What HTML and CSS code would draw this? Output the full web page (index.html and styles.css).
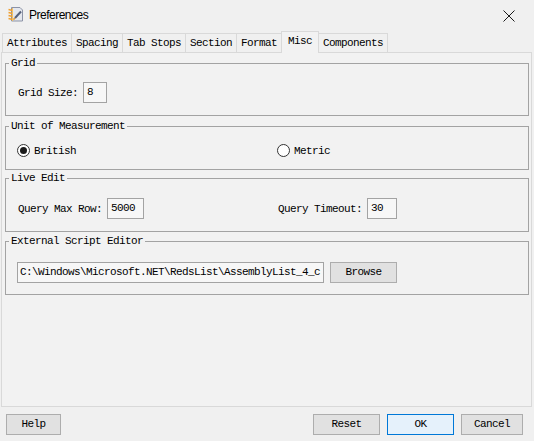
FILE: index.html
```html
<!DOCTYPE html>
<html>
<head>
<meta charset="utf-8">
<title>Preferences</title>
<link rel="stylesheet" href="styles.css">
</head>
<body>
<div class="window">
  <div class="titlebar">
    <svg class="app-icon" width="16" height="16" viewBox="0 0 16 16">
      <path d="M3.5 1.5h8.5l2.5 2.5v11h-11z" fill="#e4e7ee" stroke="#8c93a6"/>
      <path d="M0.5 3.5l4 1M0.5 6.5l4 1M0.5 9.5l4 1M0.5 12.5l4 1" stroke="#f0a030" stroke-width="1.4"/>
      <path d="M4.5 2v13" stroke="#f5c060" stroke-width="1"/>
      <path d="M13 5.5l-6 6.5" stroke="#56607a" stroke-width="2"/>
      <path d="M7 12l-1.6 1.6" stroke="#e09a3a" stroke-width="1.6"/>
    </svg>
    <span class="title">Preferences</span>
    <svg class="close" width="12" height="12" viewBox="0 0 12 12">
      <path d="M0.5 0.5l11 11M11.5 0.5l-11 11" stroke="#1a1a1a" stroke-width="1"/>
    </svg>
  </div>

  <div class="tabs">
    <div class="tab">Attributes</div>
    <div class="tab">Spacing</div>
    <div class="tab">Tab Stops</div>
    <div class="tab">Section</div>
    <div class="tab">Format</div>
    <div class="tab active">Misc</div>
    <div class="tab">Components</div>
  </div>

  <div class="panel">
    <fieldset class="group g-grid">
      <legend>Grid</legend>
      <div class="row">
        <div class="cell">
          <span class="label">Grid Size:</span>
          <span class="field w-grid">8</span>
        </div>
      </div>
    </fieldset>

    <fieldset class="group g-unit">
      <legend>Unit of Measurement</legend>
      <div class="row">
        <div class="cell radio-cell">
          <span class="radio checked"></span>
          <span class="label">British</span>
        </div>
        <div class="cell radio-cell">
          <span class="radio"></span>
          <span class="label">Metric</span>
        </div>
      </div>
    </fieldset>

    <fieldset class="group g-live">
      <legend>Live Edit</legend>
      <div class="row">
        <div class="cell">
          <span class="label">Query Max Row:</span>
          <span class="field w-maxrow">5000</span>
        </div>
        <div class="cell">
          <span class="label">Query Timeout:</span>
          <span class="field w-timeout">30</span>
        </div>
      </div>
    </fieldset>

    <fieldset class="group g-ext">
      <legend>External Script Editor</legend>
      <div class="row-ext">
        <span class="field w-path">C:\Windows\Microsoft.NET\RedsList\AssemblyList_4_c</span>
        <button class="btn browse">Browse</button>
      </div>
    </fieldset>
  </div>

  <div class="footer">
    <button class="btn help">Help</button>
    <div class="spacer"></div>
    <button class="btn reset">Reset</button>
    <button class="btn primary ok">OK</button>
    <button class="btn cancel">Cancel</button>
  </div>
</div>
</body>
</html>
```

FILE: styles.css
```css
* { box-sizing: border-box; }

html, body {
  margin: 0;
  padding: 0;
  background: #f0f0f0;
}

.window {
  width: 534px;
  height: 441px;
  overflow: hidden;
  background: #f0f0f0;
  font-family: "Liberation Mono", monospace;
  font-size: 11px;
  letter-spacing: -0.6px;
  color: #000;
}

/* Title bar */
.titlebar {
  height: 31px;
  display: flex;
  align-items: center;
}
.app-icon {
  margin-left: 8px;
  margin-top: -3px;
  flex: none;
}
.title {
  margin-left: 5px;
  margin-top: -2px;
  font-family: "Liberation Sans", Arial, sans-serif;
  font-size: 12px;
  letter-spacing: -0.5px;
  color: #000;
}
.close {
  margin-left: auto;
  margin-right: 19px;
  flex: none;
}

/* Tabs */
.tabs {
  height: 21px;
  display: flex;
  align-items: flex-end;
  padding-left: 2px;
}
.tab {
  height: 19px;
  line-height: 19px;
  padding: 0 4px;
  border: 1px solid #d9d9d9;
  border-bottom: none;
  margin-right: -1px;
  background: #f0f0f0;
  white-space: nowrap;
}
.tab.active {
  height: 22px;
  line-height: 19px;
  margin-bottom: -1px;
  padding: 0 6px;
  position: relative;
  z-index: 1;
  background: #f2f2f2;
  border-color: #d9d9d9;
}

/* Panel */
.panel {
  margin-left: 1px;
  width: 531px;
  height: 355px;
  border: 1px solid #d9d9d9;
  background: #f2f2f2;
  padding-top: 3px;
}

.group {
  margin: 0 2px 0 3px;
  padding: 0 0 0 3px;
  border: 1px solid #a3a3a3;
  min-width: 0;
}
.group legend {
  padding: 0 2px;
  line-height: 14px;
  font-size: 11px;
}
.g-grid { margin-top: 0; padding-top: 12px; padding-bottom: 12px; }
.g-unit { margin-top: 3px; padding-top: 7px; padding-bottom: 8px; }
.g-live { margin-top: 1px; padding-top: 13px; padding-bottom: 12px; }
.g-ext  { margin-top: 2px; padding-top: 14px; padding-bottom: 11px; }

.row {
  display: grid;
  grid-template-columns: 260px 1fr;
  height: 21px;
  padding-left: 9px;
}
.cell {
  display: flex;
  align-items: center;
  gap: 5px;
  white-space: nowrap;
}
.radio-cell { gap: 4px; margin-left: -1px; }

.label { line-height: 14px; }

.field {
  display: block;
  height: 21px;
  line-height: 19px;
  border: 1px solid #a3a3a3;
  background: #f7f7f7;
  padding-left: 3px;
  overflow: hidden;
  white-space: nowrap;
}
.w-grid { width: 24px; }
.w-maxrow { width: 37px; }
.w-timeout { width: 30px; }

.row-ext {
  display: flex;
  align-items: center;
  height: 21px;
  padding-left: 8px;
}
.w-path {
  width: 307px;
  padding-left: 2px;
}

.radio {
  width: 13px;
  height: 13px;
  border: 1px solid #333;
  border-radius: 50%;
  background: #fff;
  display: flex;
  align-items: center;
  justify-content: center;
  flex: none;
}
.radio.checked::after {
  content: "";
  width: 7px;
  height: 7px;
  border-radius: 50%;
  background: #1a1a1a;
}

/* Buttons */
.btn {
  height: 21px;
  margin: 0;
  padding: 0;
  border: 1px solid #adadad;
  background: #e1e1e1;
  font-family: "Liberation Mono", monospace;
  font-size: 11px;
  letter-spacing: -0.6px;
  color: #000;
  line-height: 19px;
  text-align: center;
}
.browse { width: 67px; margin-left: 6px; }

.footer {
  display: flex;
  padding: 7px 11px 0 6px;
}
.spacer { flex: 1; }
.help { width: 55px; }
.reset { width: 67px; }
.ok { width: 67px; margin-left: 7px; }
.cancel { width: 62px; margin-left: 7px; }
.primary {
  background: #e5f1fb;
  border-color: #0078d7;
}
```
